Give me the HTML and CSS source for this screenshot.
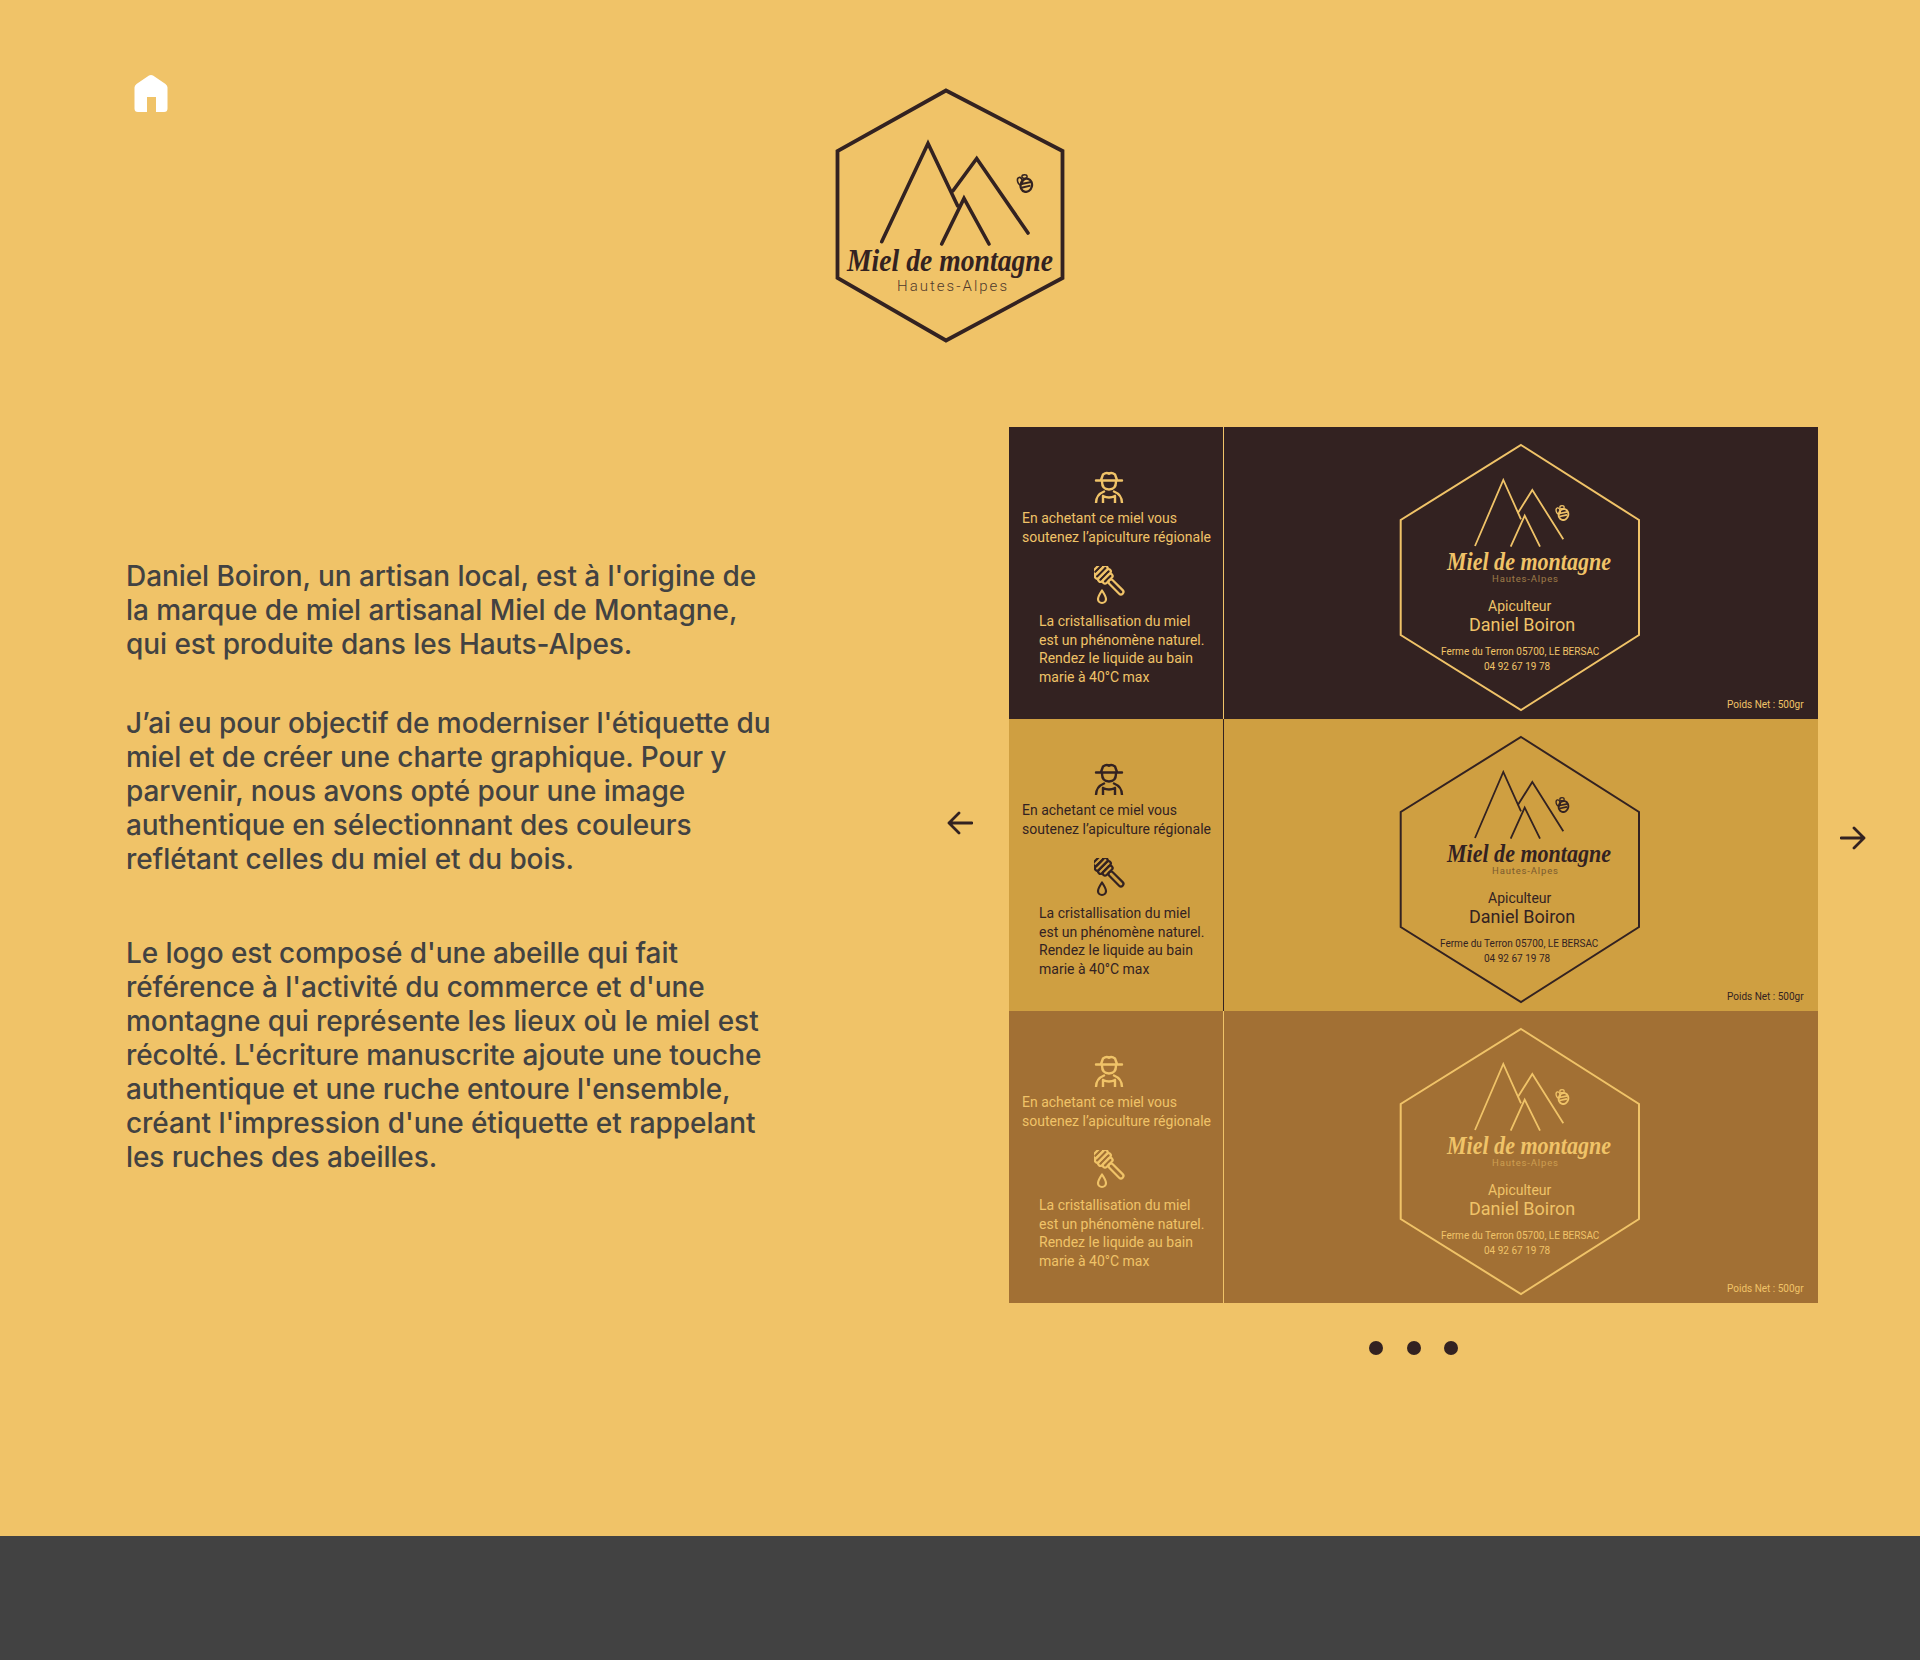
FILE: index.html
```html
<!DOCTYPE html>
<html lang="fr">
<head>
<meta charset="utf-8">
<title>Miel de montagne</title>
<link rel="stylesheet" href="styles.css">
</head>
<body>
<svg class="defs" width="0" height="0" aria-hidden="true">
  <symbol id="bee" viewBox="0 0 16 16">
    <ellipse cx="9.500" cy="9.500" rx="4.800" ry="5.600" transform="rotate(15 9.500 9.500)" fill="none" stroke="currentColor" stroke-width="1.900"/>
    <path d="M5.500 8.500 13.500 6.800M5.500 11.500 13 9.800" fill="none" stroke="currentColor" stroke-width="1.700"/>
    <ellipse cx="4.200" cy="6" rx="2" ry="3.200" transform="rotate(-15 4.200 6)" fill="none" stroke="currentColor" stroke-width="1.300"/>
    <ellipse cx="8" cy="2.200" rx="2.200" ry="1.500" fill="none" stroke="currentColor" stroke-width="1.200"/>
  </symbol>
  <symbol id="farmer" viewBox="0 0 30 32">
    <g fill="none" stroke="currentColor" stroke-width="2.400" stroke-linecap="round" stroke-linejoin="round">
      <path d="M2 9.500H28M7 9 9 3.500Q12.500 1 15 2.800Q17.500 1 21 3.500L23 9"/>
      <path d="M8 10.500C8 15 10 18.500 15 18.500S22 15 22 10.500"/>
      <path d="M2 32C2 26 5 22.500 10 20.500M28 32C28 26 25 22.500 20 20.500"/>
      <path d="M9 32V25M21 32V25M9 25Q15 28 21 25"/>
    </g>
  </symbol>
  <symbol id="dipper" viewBox="0 0 33 40">
    <g fill="none" stroke="currentColor" stroke-width="2.200" stroke-linecap="round" stroke-linejoin="round">
      <g transform="rotate(45 11 10)">
        <rect x="-1" y="4" width="4.500" height="12" rx="2.200"/>
        <rect x="3.500" y="2" width="4.500" height="16" rx="2.200"/>
        <rect x="8" y="2" width="4.500" height="16" rx="2.200"/>
        <rect x="12.500" y="4" width="4.500" height="12" rx="2.200"/>
        <rect x="17" y="7.500" width="19" height="5" rx="2.500"/>
      </g>
      <path d="M8 24.500C5 29 4 31 4 33A4 4 0 0 0 12 33C12 31 11 29 8 24.500Z"/>
    </g>
  </symbol>
</svg>

<main class="page">
  <header class="top">
    <a class="home" href="#" aria-label="Accueil">
      <svg width="34" height="37" viewBox="0 0 34 37"><path class="home-shape" fill-rule="evenodd" d="M15 .6Q17 -.4 19 .6L31.500 9Q33.500 10.500 33.500 12.500V33.500Q33.500 37 30 37H22V22H13V37H4Q.5 37 .5 33.500V12.500Q.5 10.500 2.500 9Z"/></svg>
    </a>
    <svg class="logo" width="280" height="280" viewBox="0 0 280 280">
      <g class="logo-lines">
        <path class="logo-hex" d="M126 20.500 242.500 81V208L126 270.500 17.500 208V81Z"/>
        <path d="M61.700 171.700 108 73.500 137.700 136"/>
        <path d="M133 120.700 156.700 88.500 208 163"/>
        <path d="M121.700 174 144 128.500 169 174"/>
      </g>
      <use href="#bee" x="195" y="104" width="19" height="19"/>
      <text class="script" x="27" y="201" textLength="206" lengthAdjust="spacingAndGlyphs" font-size="31">Miel de montagne</text>
      <text class="sub" x="77" y="220.500" textLength="110" font-size="15">Hautes-Alpes</text>
    </svg>
    <div></div>
  </header>

  <section class="content">
    <div class="story">
      <p class="para">Daniel Boiron, un artisan local, est à l'origine de<br>la marque de miel artisanal Miel de Montagne,<br>qui est produite dans les Hauts-Alpes.</p>
      <p class="para para-b">J’ai eu pour objectif de moderniser l'étiquette du<br>miel et de créer une charte graphique. Pour y<br>parvenir, nous avons opté pour une image<br>authentique en sélectionnant des couleurs<br>reflétant celles du miel et du bois.</p>
      <p class="para para-c">Le logo est composé d'une abeille qui fait<br>référence à l'activité du commerce et d'une<br>montagne qui représente les lieux où le miel est<br>récolté. L'écriture manuscrite ajoute une touche<br>authentique et une ruche entoure l'ensemble,<br>créant l'impression d'une étiquette et rappelant<br>les ruches des abeilles.</p>
    </div>

    <button class="arrow arrow-prev" aria-label="Précédent">
      <svg width="26" height="24" viewBox="0 0 26 24"><path d="M25 12H2M12 2 2 12 12 22"/></svg>
    </button>

    <div class="carousel">
      <div class="sheet">
        <article class="label label-dark">
          <div class="side">
            <svg class="icon-farmer"><use href="#farmer"/></svg>
            <p class="note note-a">En achetant ce miel vous<br>soutenez l’apiculture régionale</p>
            <svg class="icon-dipper"><use href="#dipper"/></svg>
            <p class="note note-b">La cristallisation du miel<br>est un phénomène naturel.<br>Rendez le liquide au bain<br>marie à 40°C max</p>
          </div>
          <svg class="face" viewBox="0 0 594 292">
            <g class="face-lines">
              <path class="face-hex" d="M297 18 415 93V208L297 283 176.700 208V93Z"/>
              <path d="M251 119 279.300 53 297 92.300"/><path d="M293.700 86.300 308.300 63 339.300 112.300"/><path d="M286.700 119.700 300.700 88.700 316 119.700"/>
            </g>
            <use href="#bee" x="330" y="78" width="16" height="16"/>
            <text class="script" x="223" y="143" textLength="164" lengthAdjust="spacingAndGlyphs" font-size="24.500">Miel de montagne</text>
            <text class="sub sub-small" x="268" y="155" textLength="66" font-size="9.500">Hautes-Alpes</text>
            <text class="t-role" x="264" y="184">Apiculteur</text>
            <text class="t-name" x="245" y="204">Daniel Boiron</text>
            <text class="t-small" x="217" y="228">Ferme du Terron 05700, LE BERSAC</text>
            <text class="t-small" x="260" y="243">04 92 67 19 78</text>
            <text class="t-small" x="503" y="281">Poids Net : 500gr</text>
          </svg>
        </article>

        <article class="label label-mid">
          <div class="side">
            <svg class="icon-farmer"><use href="#farmer"/></svg>
            <p class="note note-a">En achetant ce miel vous<br>soutenez l’apiculture régionale</p>
            <svg class="icon-dipper"><use href="#dipper"/></svg>
            <p class="note note-b">La cristallisation du miel<br>est un phénomène naturel.<br>Rendez le liquide au bain<br>marie à 40°C max</p>
          </div>
          <svg class="face" viewBox="0 0 594 292">
            <g class="face-lines">
              <path class="face-hex" d="M297 18 415 93V208L297 283 176.700 208V93Z"/>
              <path d="M251 119 279.300 53 297 92.300"/><path d="M293.700 86.300 308.300 63 339.300 112.300"/><path d="M286.700 119.700 300.700 88.700 316 119.700"/>
            </g>
            <use href="#bee" x="330" y="78" width="16" height="16"/>
            <text class="script" x="223" y="143" textLength="164" lengthAdjust="spacingAndGlyphs" font-size="24.500">Miel de montagne</text>
            <text class="sub sub-small" x="268" y="155" textLength="66" font-size="9.500">Hautes-Alpes</text>
            <text class="t-role" x="264" y="184">Apiculteur</text>
            <text class="t-name" x="245" y="204">Daniel Boiron</text>
            <text class="t-small" x="216" y="228">Ferme du Terron 05700, LE BERSAC</text>
            <text class="t-small" x="260" y="243">04 92 67 19 78</text>
            <text class="t-small" x="503" y="281">Poids Net : 500gr</text>
          </svg>
        </article>

        <article class="label label-brown">
          <div class="side">
            <svg class="icon-farmer"><use href="#farmer"/></svg>
            <p class="note note-a">En achetant ce miel vous<br>soutenez l’apiculture régionale</p>
            <svg class="icon-dipper"><use href="#dipper"/></svg>
            <p class="note note-b">La cristallisation du miel<br>est un phénomène naturel.<br>Rendez le liquide au bain<br>marie à 40°C max</p>
          </div>
          <svg class="face" viewBox="0 0 594 292">
            <g class="face-lines">
              <path class="face-hex" d="M297 18 415 93V208L297 283 176.700 208V93Z"/>
              <path d="M251 119 279.300 53 297 92.300"/><path d="M293.700 86.300 308.300 63 339.300 112.300"/><path d="M286.700 119.700 300.700 88.700 316 119.700"/>
            </g>
            <use href="#bee" x="330" y="78" width="16" height="16"/>
            <text class="script" x="223" y="143" textLength="164" lengthAdjust="spacingAndGlyphs" font-size="24.500">Miel de montagne</text>
            <text class="sub sub-small" x="268" y="155" textLength="66" font-size="9.500">Hautes-Alpes</text>
            <text class="t-role" x="264" y="184">Apiculteur</text>
            <text class="t-name" x="245" y="204">Daniel Boiron</text>
            <text class="t-small" x="217" y="228">Ferme du Terron 05700, LE BERSAC</text>
            <text class="t-small" x="260" y="243">04 92 67 19 78</text>
            <text class="t-small" x="503" y="281">Poids Net : 500gr</text>
          </svg>
        </article>
      </div>
      <div class="dots"><span class="dot"></span><span class="dot"></span><span class="dot"></span></div>
    </div>

    <button class="arrow arrow-next" aria-label="Suivant">
      <svg width="26" height="24" viewBox="0 0 26 24"><path d="M1 12H24M14 2 24 12 14 22"/></svg>
    </button>
  </section>
</main>
<footer class="footer"></footer>
</body>
</html>
```

FILE: styles.css
```css
* { box-sizing: border-box; }
html, body { margin: 0; padding: 0; }
body { background: #f0c368; color: #332221; font-family: "Inter", "Liberation Sans", sans-serif; }
.defs { position: absolute; }

.page { height: 1536px; background: #f0c368; }

.top { display: grid; grid-template-columns: 1fr 280px 1fr; height: 350px; padding-top: 70px; }
.home { display: block; padding: 5px 0 0 134px; height: 42px; }
.home svg { display: block; }
.home-shape { fill: #ffffff; }

.logo { display: block; color: #332221; overflow: visible; }
.logo-lines { fill: none; stroke: #332221; stroke-width: 3.600; stroke-linecap: round; stroke-linejoin: miter; }
.logo-hex { stroke-width: 3.800; }

.script { font-family: "Liberation Serif", serif; font-style: italic; font-weight: 700; fill: currentColor; }
.sub { font-family: "Roboto", sans-serif; font-weight: 300; fill: currentColor; opacity: .85; }
.sub-small { opacity: .55; font-weight: 400; }

.content { display: flex; align-items: flex-start; }

.story { width: 947px; padding: 209px 0 0 126px; flex: none; }
.para { margin: 0; font-size: 28px; font-weight: 500; letter-spacing: -0.07px; line-height: 34px; color: #424242; white-space: nowrap; }
.para-b { margin-top: 45px; }
.para-c { margin-top: 60px; }

.arrow { display: block; padding: 0; border: 0; background: none; cursor: pointer; }
.arrow svg { display: block; }
.arrow path { fill: none; stroke: #332221; stroke-width: 2.800; stroke-linecap: round; stroke-linejoin: round; }
.arrow-prev { width: 62px; margin-top: 461px; flex: none; }
.arrow-next { margin: 476px 0 0 22px; flex: none; }

.carousel { width: 809px; flex: none; margin-top: 77px; }
.sheet { display: grid; grid-template-rows: repeat(3, 292px); }
.label { display: grid; grid-template-columns: 215px 594px; color: #f0c368; }
.label-dark { background: #332221; }
.label-mid { background: #cf9f41; color: #332221; }
.label-brown { background: #a27034; }

.side { border-right: 1px solid currentColor; padding-top: 44px; display: flex; flex-direction: column; font-family: "Roboto", sans-serif; }
.icon-farmer { display: block; width: 30px; height: 32px; margin-left: 85px; flex: none; }
.icon-dipper { display: block; width: 33px; height: 40px; margin: 20px 0 0 85px; flex: none; }
.note { margin: 0; font-size: 14px; line-height: 18.600px; white-space: nowrap; }
.note-a { margin: 6px 0 0 13px; }
.note-b { margin: 6px 0 0 30px; }

.face { display: block; width: 594px; height: 292px; }
.face-lines { fill: none; stroke: currentColor; stroke-width: 1.800; stroke-linecap: butt; stroke-linejoin: miter; }
.face-hex { stroke-width: 2; }
.t-role, .t-name, .t-small { font-family: "Roboto", sans-serif; fill: currentColor; }
.t-role { font-size: 14px; }
.t-name { font-size: 18px; }
.t-small { font-size: 10px; }

.dots { display: flex; justify-content: center; gap: 23.500px; margin-top: 38px; }
.dot { width: 14px; height: 14px; border-radius: 50%; background: #332221; }

.footer { height: 124px; background: #424242; }
```
